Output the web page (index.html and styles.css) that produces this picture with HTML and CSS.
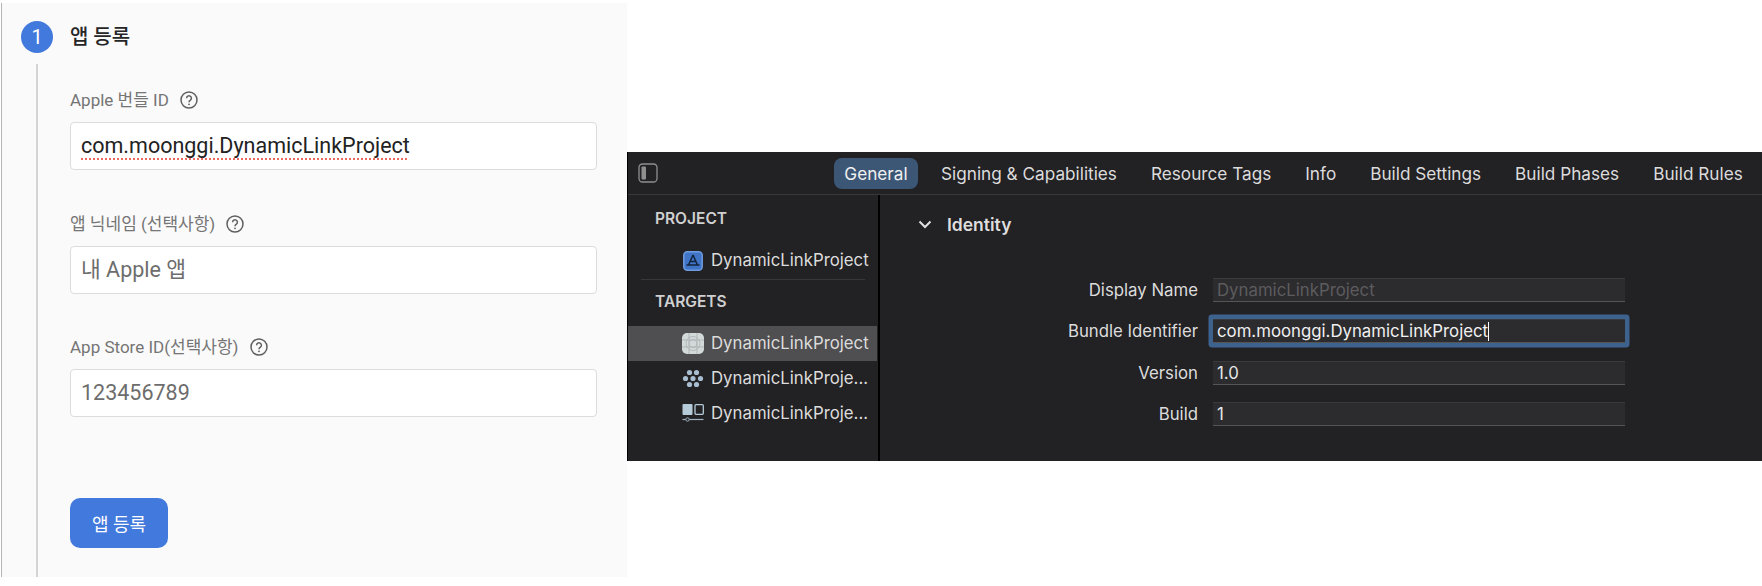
FILE: index.html
```html
<!DOCTYPE html>
<html lang="ko">
<head>
    <meta charset="utf-8">
    <title>앱 등록</title>
    <link rel="stylesheet" href="styles.css">
</head>
<body>
    <div class="firebase">
        <div class="step-head">
            <span class="step-num">1</span>
            <span class="step-title">앱 등록</span>
        </div>
        <div class="step-body">
            <div class="field">
                <div class="field-label"><span class="label-text">Apple 번들 ID</span>
                    <svg class="help" viewBox="0 0 18 18"><circle cx="9" cy="9" r="8"/><path d="M6.600 7.200a2.400 2.400 0 1 1 3.800 2c-.9.6-1.400 1-1.400 2.100"/><circle class="dot" cx="9" cy="13.300" r=".9"/></svg>
                </div>
                <div class="input filled"><span class="squiggle">com.moonggi.DynamicLinkProject</span></div>
            </div>
            <div class="field">
                <div class="field-label"><span class="label-text">앱 닉네임 (선택사항)</span>
                    <svg class="help" viewBox="0 0 18 18"><circle cx="9" cy="9" r="8"/><path d="M6.600 7.200a2.400 2.400 0 1 1 3.800 2c-.9.6-1.400 1-1.400 2.100"/><circle class="dot" cx="9" cy="13.300" r=".9"/></svg>
                </div>
                <div class="input">내 Apple 앱</div>
            </div>
            <div class="field">
                <div class="field-label"><span class="label-text">App Store ID(선택사항)</span>
                    <svg class="help" viewBox="0 0 18 18"><circle cx="9" cy="9" r="8"/><path d="M6.600 7.200a2.400 2.400 0 1 1 3.800 2c-.9.6-1.400 1-1.400 2.100"/><circle class="dot" cx="9" cy="13.300" r=".9"/></svg>
                </div>
                <div class="input">123456789</div>
            </div>
            <button type="button" class="primary">앱 등록</button>
        </div>
    </div>

    <div class="xcode">
        <div class="toolbar">
            <svg class="side-toggle" viewBox="0 0 20 20"><rect x="1" y="1" width="18" height="18" rx="3.500"/><rect class="fill" x="3.500" y="3.500" width="4.500" height="13" rx="1"/></svg>
            <div class="tabs">
                <span class="tab active">General</span>
                <span class="tab">Signing &amp; Capabilities</span>
                <span class="tab">Resource Tags</span>
                <span class="tab">Info</span>
                <span class="tab">Build Settings</span>
                <span class="tab">Build Phases</span>
                <span class="tab">Build Rules</span>
            </div>
        </div>
        <div class="xcode-main">
            <div class="sidebar">
                <div class="side-head">PROJECT</div>
                <div class="side-row">
                    <svg class="row-icon" viewBox="0 0 20 20"><rect x=".8" y=".8" width="18.400" height="18.400" rx="3.500" fill="#3f74c6" stroke="#6f9be0" stroke-width="1.500"/><path d="M10 4 5.500 14M10 4l4.500 10M3.500 14h13M7.500 10.500h5" stroke="#14233c" stroke-width="1.500" fill="none"/></svg>
                    <span class="row-name">DynamicLinkProject</span>
                </div>
                <div class="side-sep"></div>
                <div class="side-head targets">TARGETS</div>
                <div class="side-row selected">
                    <svg class="row-icon wide" viewBox="0 0 22 21"><rect width="22" height="21" rx="5" fill="#d3d8d9"/><g fill="none" stroke="#aab1b3" stroke-width=".8"><circle cx="11" cy="10.500" r="4"/><circle cx="11" cy="10.500" r="7"/><path d="M0 7h22M0 14h22M7 0v21M15 0v21"/></g></svg>
                    <span class="row-name">DynamicLinkProject</span>
                </div>
                <div class="side-row">
                    <svg class="row-icon wide" viewBox="0 0 22 21"><g fill="#a9bdd0"><circle cx="7.500" cy="4.500" r="2.600"/><circle cx="14.500" cy="4.500" r="2.600"/><circle cx="3.500" cy="10.500" r="2.600"/><circle cx="11" cy="10.500" r="2.600"/><circle cx="18.500" cy="10.500" r="2.600"/><circle cx="7.500" cy="16.500" r="2.600"/><circle cx="14.500" cy="16.500" r="2.600"/></g></svg>
                    <span class="row-name">DynamicLinkProje...</span>
                </div>
                <div class="side-row">
                    <svg class="row-icon wide" viewBox="0 0 22 21"><rect x=".5" y="1" width="10" height="11" rx="1" fill="#b5cbd8"/><rect x="13" y="1.700" width="8.300" height="9.600" rx="1" fill="none" stroke="#b5cbd8" stroke-width="1.300"/><path d="M.5 16.500h21" stroke="#9fb3c0" stroke-width="1.200"/><circle cx="5.500" cy="16.500" r="1.700" fill="#222124" stroke="#9fb3c0"/></svg>
                    <span class="row-name">DynamicLinkProje...</span>
                </div>
            </div>
            <div class="detail">
                <div class="section-head">
                    <svg class="chevron" viewBox="0 0 14 9"><path d="M1.500 1.500 7 7l5.500-5.500"/></svg>
                    <span>Identity</span>
                </div>
                <div class="form">
                    <div class="form-row"><label>Display Name</label><div class="box muted">DynamicLinkProject</div></div>
                    <div class="form-row"><label>Bundle Identifier</label><div class="box focus">com.moonggi.DynamicLinkProject<span class="caret"></span></div></div>
                    <div class="form-row"><label>Version</label><div class="box">1.0</div></div>
                    <div class="form-row"><label>Build</label><div class="box">1</div></div>
                </div>
            </div>
        </div>
    </div>
</body>
</html>
```

FILE: styles.css
```css
html, body {
    margin: 0;
    padding: 0;
    background-color: #fff;
}
body {
    display: flex;
    align-items: flex-start;
    height: 586px;
    overflow: hidden;
    font-family: Roboto, "Noto Sans CJK KR", sans-serif;
}

/* left: firebase form */
.firebase {
    width: 625px;
    height: 574px;
    margin-top: 3px;
    margin-left: 1px;
    background-color: #fafafa;
    border-left: 1px solid #b4b4b4;
    display: flex;
    flex-direction: column;
}
.step-head {
    display: flex;
    align-items: center;
    gap: 17px;
    height: 32px;
    margin-top: 18px;
    padding-left: 19px;
}
.step-num {
    width: 32px;
    height: 32px;
    border-radius: 50%;
    background-color: #4279dc;
    color: #fff;
    font-size: 20px;
    line-height: 32px;
    text-align: center;
}
.step-title {
    padding-bottom: 3px;
    font-size: 20px;
    font-weight: 500;
    color: #262626;
}
.step-body {
    flex: 1;
    margin-top: 11px;
    margin-left: 34px;
    padding-left: 32px;
    border-left: 2px solid #d4d4d4;
    width: 527px;
}
.field {
    margin-bottom: 41.500px;
}
.field-label {
    display: flex;
    align-items: center;
    gap: 11px;
    height: 24px;
    margin-top: 24px;
    margin-bottom: 10px;
    font-size: 17px;
    color: #757575;
}
.field + .field .field-label {
    margin-top: 0;
}
.label-text {
    padding-bottom: 3px;
}
.help {
    width: 18px;
    height: 18px;
    fill: none;
    stroke: #5f5f5f;
    stroke-width: 1.5;
}
.help .dot {
    fill: #5f5f5f;
    stroke: none;
}
.input {
    height: 48px;
    box-sizing: border-box;
    padding: 0 10px;
    background-color: #fff;
    border: 1px solid #dcdcdc;
    border-radius: 4px;
    font-size: 21.500px;
    line-height: 46px;
    color: #6d6d6d;
}
.input.filled {
    color: #222;
}
.squiggle {
    text-decoration: underline dotted #ea6a5e 2px;
    text-underline-offset: 5px;
}
.primary {
    display: block;
    width: 98px;
    height: 50px;
    margin-top: 81px;
    border: 0;
    border-radius: 10px;
    background-color: #4279dc;
    color: #fff;
    font-family: inherit;
    font-size: 18px;
}

/* right: xcode window */
.xcode {
    width: 1135px;
    height: 309px;
    margin-top: 152px;
    background-color: #222124;
    border-left: 1px solid #000;
    box-sizing: border-box;
    color: #dcdcdc;
    font-family: Inter, "Liberation Sans", sans-serif;
    font-size: 16.800px;
}
.toolbar {
    display: flex;
    align-items: center;
    height: 42px;
    padding-left: 10px;
    border-bottom: 1px solid #38383a;
}
.side-toggle {
    width: 20px;
    height: 20px;
    fill: none;
    stroke: #8f8f90;
    stroke-width: 1.3;
}
.side-toggle .fill {
    fill: #8f8f90;
    stroke: none;
}
.tabs {
    display: flex;
    align-items: center;
    margin-left: 176px;
    gap: 12px;
}
.tab {
    padding: 0 11px;
    font-size: 17.200px;
    line-height: 31px;
    white-space: nowrap;
}
.tab.active {
    width: 84px;
    box-sizing: border-box;
    padding: 0;
    text-align: center;
    background-color: #3c5676;
    border-radius: 8px;
    color: #f0f0f0;
}
.xcode-main {
    display: flex;
    height: 266px;
}
.sidebar {
    width: 252px;
    box-sizing: border-box;
    border-right: 2px solid #000;
}
.side-head {
    padding-left: 27px;
    margin-top: 12px;
    height: 24px;
    line-height: 24px;
    font-size: 15.500px;
    font-weight: 600;
    color: #d0d0d0;
}
.side-head.targets {
    margin-top: 10px;
    margin-bottom: 12px;
}
.side-row {
    display: flex;
    align-items: center;
    height: 35px;
    padding-left: 54px;
    white-space: nowrap;
}
.side-head + .side-row {
    margin-top: 12px;
}
.side-head.targets + .side-row {
    margin-top: 0;
}
.side-row.selected {
    background-color: #4f4e50;
    margin-right: 1px;
}
.row-icon {
    width: 20px;
    height: 20px;
    flex: none;
    margin-left: 1px;
    margin-right: 8px;
}
.row-icon.wide {
    width: 22px;
    height: 21px;
    margin-left: 0;
    margin-right: 7px;
}
.row-name {
    padding-bottom: 1px;
}
.side-sep {
    height: 1px;
    margin: 1px 13px 0 13px;
    background-color: #38383a;
}
.detail {
    flex: 1;
}
.section-head {
    display: flex;
    align-items: center;
    gap: 15px;
    height: 24px;
    margin-top: 17px;
    padding-left: 38px;
    font-size: 17.500px;
    font-weight: 600;
    color: #dedede;
}
.chevron {
    width: 14px;
    height: 9px;
    fill: none;
    stroke: #e0e0e0;
    stroke-width: 2;
}
.form {
    margin-top: 40px;
    display: flex;
    flex-direction: column;
    gap: 13.400px;
}
.form-row {
    display: flex;
    align-items: center;
    height: 28px;
}
.form-row label {
    width: 318px;
    text-align: right;
}
.box {
    width: 412px;
    height: 24px;
    box-sizing: border-box;
    margin-left: 15px;
    padding-left: 4px;
    background-color: #2c2b2e;
    border-bottom: 1px solid #555;
    border-top: 1px solid #3a3a3c;
    line-height: 22px;
    white-space: nowrap;
    color: #e6e6e6;
}
.box.muted {
    color: #5c5c5e;
}
.box.focus {
    box-shadow: 0 0 0 4.500px #3e628e;
    border-radius: 1px;
    color: #f0f0f0;
}
.caret {
    display: inline-block;
    width: 1px;
    height: 19px;
    vertical-align: -4px;
    background-color: #fff;
}
```
